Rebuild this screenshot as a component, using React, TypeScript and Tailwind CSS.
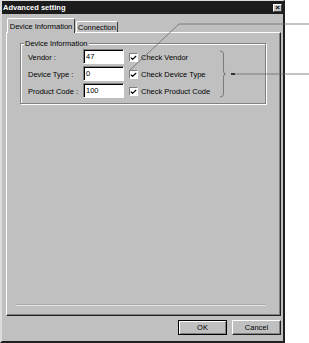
import { Check } from 'lucide-react'

const font = { fontFamily: '"Liberation Sans", Arial, sans-serif' }

const rows = [
  { label: 'Vendor :', value: '47', check: 'Check Vendor' },
  { label: 'Device Type :', value: '0', check: 'Check Device Type' },
  { label: 'Product Code :', value: '100', check: 'Check Product Code' },
]

function Row({ label, value, check }: { label: string; value: string; check: string }) {
  return (
    <div className="flex h-[17px] items-start">
      <span className="w-[55px] pt-[4px] leading-[9px] text-black">{label}</span>
      <div className="flex h-[15px] w-[41px] items-center border border-t-[#808080] border-l-[#808080] border-r-white border-b-white bg-white pl-[2px] shadow-[inset_1px_1px_0_#000]">
        <span className="leading-[9px]">{value}</span>
      </div>
      <div className="ml-[5px] mt-[4px] flex h-[9px] w-[9px] items-center justify-center border border-t-[#808080] border-l-[#808080] border-r-white border-b-white bg-white">
        <Check size={8} strokeWidth={4} className="text-black" />
      </div>
      <span className="ml-[3px] pt-[4px] leading-[9px] text-black">{check}</span>
    </div>
  )
}

export default function App() {
  return (
    <div className="relative h-[343px] w-[309px] overflow-hidden bg-white text-[7.5px]" style={font}>
      <div className="flex h-[343px] w-[285px] flex-col border-l-2 border-t border-r-2 border-b-2 border-l-[#dcdcdc] border-t-[#dcdcdc] border-r-[#202020] border-b-[#202020] bg-[#c0c0c0]">
        {/* title bar */}
        <div className="flex h-[13px] items-center justify-between bg-[#1c1c1c] pl-[1px] pr-[1px]">
          <span className="font-bold leading-[9px] text-white">Advanced setting</span>
          <div className="flex h-[8px] w-[9px] items-center justify-center border border-t-white border-l-white border-r-[#404040] border-b-[#404040] bg-[#c8c8c8] text-[8px] font-bold leading-[8px] text-black">
            ×
          </div>
        </div>

        {/* tabs */}
        <div className="flex items-end pl-[5px] pt-[4px]">
          <div className="relative z-10 -mb-px flex h-[15px] w-[68px] items-start justify-center rounded-t-[2px] border-l border-t border-r border-l-white border-t-white border-r-[#404040] bg-[#c0c0c0] pt-[3px]">
            <span className="leading-[9px]">Device Information</span>
          </div>
          <div className="ml-[1px] flex h-[11px] w-[42px] items-start justify-center rounded-t-[2px] border-l border-t border-r border-l-white border-t-white border-r-[#404040] pt-[1px]">
            <span className="leading-[9px]">Connection</span>
          </div>
        </div>

        {/* tab panel */}
        <div className="ml-[4px] flex h-[284px] w-[275px] flex-col border border-l-white border-t-white border-r-[#202020] border-b-[#202020] shadow-[inset_-1px_-1px_0_#808080]">
          <div className="relative ml-[13px] mt-[10px] w-[246px] border border-[#808080] pb-[3px] pl-[7px] pt-[5px] shadow-[inset_1px_1px_0_#fff,1px_1px_0_#fff]">
            <span className="absolute left-[3px] top-[-5px] bg-[#c0c0c0] px-[1px] leading-[9px]">Device Information</span>
            {rows.map(r => (
              <Row key={r.label} {...r} />
            ))}
          </div>
          <div className="flex-1" />
          <div className="mb-[9px] ml-[9px] h-[2px] w-[250px] border-t border-b border-t-[#a8a8a8] border-b-[#e4e4e4]" />
        </div>

        {/* buttons */}
        <div className="mt-[4px] flex justify-end gap-[5px] pr-[2px]">
          <div className="flex h-[15px] w-[49px] items-center justify-center border border-black shadow-[inset_1px_1px_0_#fff,inset_-1px_-1px_0_#808080]">
            <span className="leading-[9px]">OK</span>
          </div>
          <div className="flex h-[15px] w-[49px] items-center justify-center border border-l-white border-t-white border-r-[#202020] border-b-[#202020] shadow-[inset_-1px_-1px_0_#808080]">
            <span className="leading-[9px]">Cancel</span>
          </div>
        </div>
      </div>

      {/* annotation callouts */}
      <svg className="pointer-events-none absolute left-0 top-0" width="309" height="343" viewBox="0 0 309 343">
        <polyline points="309,24 179,24 130,70" fill="none" stroke="#6a6a6a" strokeWidth="0.8" />
        <path
          d="M220 51 Q223.5 51 223.5 54 L223.5 71 Q223.5 74 225.5 74 Q223.5 74 223.5 77 L223.5 94 Q223.5 97 220 97"
          fill="none"
          stroke="#6a6a6a"
          strokeWidth="0.8"
        />
        <line x1="231" y1="74" x2="235" y2="74" stroke="#111" strokeWidth="1.6" />
        <line x1="235" y1="74" x2="309" y2="74" stroke="#6a6a6a" strokeWidth="0.8" />
      </svg>
    </div>
  )
}
